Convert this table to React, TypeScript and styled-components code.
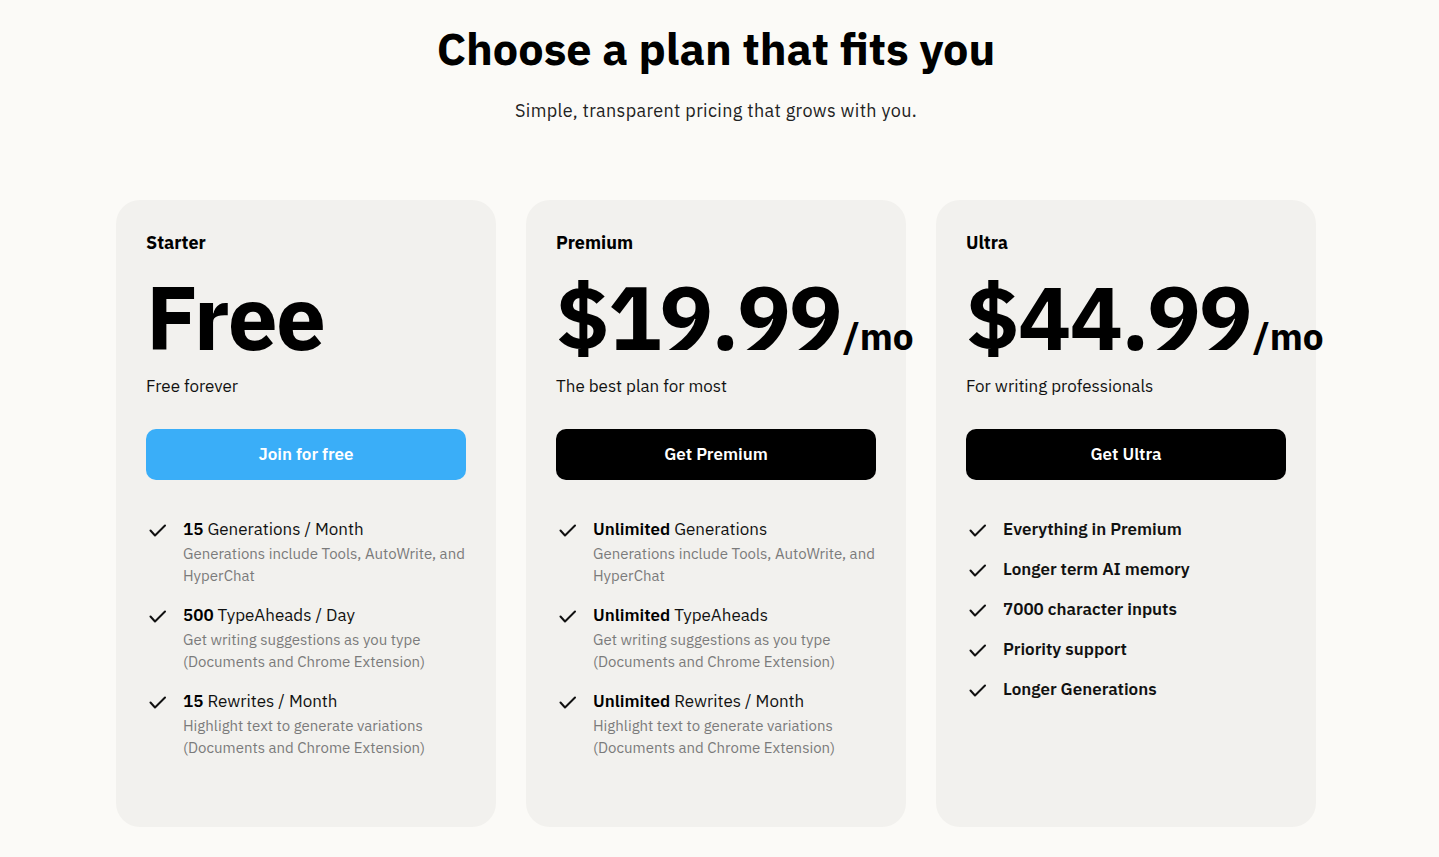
import styled, { createGlobalStyle } from 'styled-components'

const GlobalStyle = createGlobalStyle`
  html, body {
    margin: 0;
    padding: 0;
    background: #fbfaf7;
  }
  body {
    font-family: 'IBM Plex Sans', 'Noto Sans', 'Liberation Sans', sans-serif;
    color: #000;
  }
`

const Page = styled.main`
  width: calc(100% - 7px);
  padding: 17px 0 31px;
  display: flex;
  flex-direction: column;
  align-items: center;
`

const Title = styled.h1`
  margin: 0;
  font-size: 45px;
  line-height: 62px;
  font-weight: 700;
`

const Subtitle = styled.p`
  margin: 19px 0 0;
  font-size: 18px;
  line-height: 26px;
  letter-spacing: 0.35px;
  color: #222;
`

const Grid = styled.div`
  margin-top: 76px;
  display: grid;
  grid-template-columns: repeat(3, 380px);
  gap: 30px;
`

const Card = styled.section`
  background: #f2f1ee;
  border-radius: 24px;
  padding: 31px 30px 0;
  height: 627px;
  box-sizing: border-box;
  display: flex;
  flex-direction: column;
`

const PlanName = styled.h2`
  margin: 0;
  font-size: 18px;
  line-height: 24px;
  font-weight: 700;
`

const PriceRow = styled.div`
  margin-top: 14px;
  display: flex;
  align-items: baseline;
  white-space: nowrap;
`

const Price = styled.span`
  font-size: 89px;
  line-height: 96px;
  font-weight: 700;
  letter-spacing: -1.6px;
`

const Per = styled.span`
  font-size: 37px;
  font-weight: 700;
  margin-left: 2px;
`

const Tagline = styled.p`
  margin: 9px 0 0;
  font-size: 17px;
  line-height: 24px;
  color: #111;
`

const Button = styled.button<{ $accent?: boolean }>`
  margin-top: 31px;
  width: 320px;
  height: 51px;
  padding: 0 0 2px;
  border: none;
  border-radius: 10px;
  background: ${p => (p.$accent ? '#3aaef8' : '#000')};
  color: #fff;
  font-family: inherit;
  font-size: 17px;
  font-weight: 600;
  cursor: pointer;
`

const List = styled.ul`
  list-style: none;
  margin: 37px 0 0;
  padding: 0;
  display: flex;
  flex-direction: column;
  gap: 16px;
`

const Item = styled.li`
  display: flex;
  align-items: flex-start;
`

const CheckBox = styled.span`
  flex: 0 0 37px;
  height: 24px;
  display: flex;
  align-items: center;
  padding-left: 3px;
  box-sizing: border-box;
  padding-top: 3px;
`

const ItemTitle = styled.div<{ $bold?: boolean }>`
  font-size: 17px;
  line-height: 24px;
  font-weight: ${p => (p.$bold ? 600 : 400)};
  color: #111;
  b {
    font-weight: 600;
    color: #000;
  }
`

const Desc = styled.div`
  margin-top: 2px;
`

const ItemDesc = styled.div`
  font-size: 15px;
  line-height: 22px;
  color: #7b7b7b;
`

const Check = () => (
  <svg width="17" height="13" viewBox="0 0 17 13" fill="none">
    <path d="M1.5 6.5 L6 11.5 L16 1.5" stroke="#111" strokeWidth="2" strokeLinecap="round" strokeLinejoin="round" />
  </svg>
)

type Feature = { strong?: string; rest?: string; desc?: string[] }

type Plan = {
  name: string
  price: string
  per?: boolean
  tagline: string
  cta: string
  accent?: boolean
  boldList?: boolean
  features: Feature[]
}

const plans: Plan[] = [
  {
    name: 'Starter',
    price: 'Free',
    tagline: 'Free forever',
    cta: 'Join for free',
    accent: true,
    features: [
      { strong: '15', rest: ' Generations / Month', desc: ['Generations include Tools, AutoWrite, and', 'HyperChat'] },
      { strong: '500', rest: ' TypeAheads / Day', desc: ['Get writing suggestions as you type', '(Documents and Chrome Extension)'] },
      { strong: '15', rest: ' Rewrites / Month', desc: ['Highlight text to generate variations', '(Documents and Chrome Extension)'] },
    ],
  },
  {
    name: 'Premium',
    price: '$19.99',
    per: true,
    tagline: 'The best plan for most',
    cta: 'Get Premium',
    features: [
      { strong: 'Unlimited', rest: ' Generations', desc: ['Generations include Tools, AutoWrite, and', 'HyperChat'] },
      { strong: 'Unlimited', rest: ' TypeAheads', desc: ['Get writing suggestions as you type', '(Documents and Chrome Extension)'] },
      { strong: 'Unlimited', rest: ' Rewrites / Month', desc: ['Highlight text to generate variations', '(Documents and Chrome Extension)'] },
    ],
  },
  {
    name: 'Ultra',
    price: '$44.99',
    per: true,
    tagline: 'For writing professionals',
    cta: 'Get Ultra',
    boldList: true,
    features: [
      { rest: 'Everything in Premium' },
      { rest: 'Longer term AI memory' },
      { rest: '7000 character inputs' },
      { rest: 'Priority support' },
      { rest: 'Longer Generations' },
    ],
  },
]

export default function App() {
  return (
    <>
      <GlobalStyle />
      <Page>
        <Title>Choose a plan that fits you</Title>
        <Subtitle>Simple, transparent pricing that grows with you.</Subtitle>
        <Grid>
          {plans.map(plan => (
            <Card key={plan.name}>
              <PlanName>{plan.name}</PlanName>
              <PriceRow>
                <Price>{plan.price}</Price>
                {plan.per && <Per>/mo</Per>}
              </PriceRow>
              <Tagline>{plan.tagline}</Tagline>
              <Button $accent={plan.accent}>{plan.cta}</Button>
              <List>
                {plan.features.map((f, i) => (
                  <Item key={i}>
                    <CheckBox>
                      <Check />
                    </CheckBox>
                    <div>
                      <ItemTitle $bold={plan.boldList}>
                        {f.strong && <b>{f.strong}</b>}
                        {f.rest}
                      </ItemTitle>
                      {f.desc && (
                        <Desc>
                          {f.desc.map(line => (
                            <ItemDesc key={line}>{line}</ItemDesc>
                          ))}
                        </Desc>
                      )}
                    </div>
                  </Item>
                ))}
              </List>
            </Card>
          ))}
        </Grid>
      </Page>
    </>
  )
}
